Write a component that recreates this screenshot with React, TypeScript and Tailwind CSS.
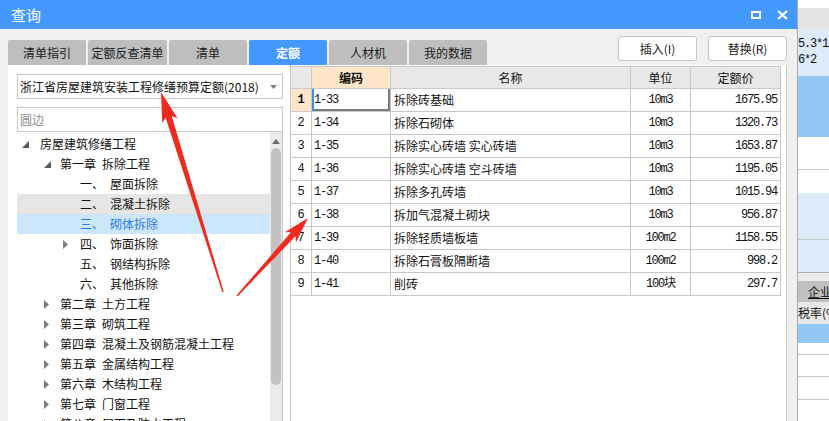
import React from "react"

const cjk = { fontFamily: '"Noto Sans CJK SC", "Noto Sans", sans-serif' }
const mono = { fontFamily: '"Liberation Mono", "Noto Sans CJK SC", monospace' }

const tabs = [
  { label: "清单指引", w: "w-[78px]" },
  { label: "定额反查清单", w: "w-[79px]" },
  { label: "清单", w: "w-[78px]" },
  { label: "定额", w: "w-[78px]", active: true },
  { label: "人材机", w: "w-[78px]" },
  { label: "我的数据", w: "w-[78px]" },
]

type Node = {
  pad: string
  gap: string
  icon?: "open" | "closed"
  pre?: string
  text: string
  hl?: "gray" | "blue"
  chapter?: boolean
}

const tree: Node[] = [
  { pad: "pl-[4px]", gap: "mr-[11px]", icon: "open", text: "房屋建筑修缮工程" },
  { pad: "pl-[26px]", gap: "mr-[9px]", icon: "open", pre: "第一章", text: "拆除工程", chapter: true },
  { pad: "pl-[44px]", gap: "mr-[11px]", pre: "一、", text: "屋面拆除" },
  { pad: "pl-[44px]", gap: "mr-[11px]", pre: "二、", text: "混凝土拆除", hl: "gray" },
  { pad: "pl-[44px]", gap: "mr-[11px]", pre: "三、", text: "砌体拆除", hl: "blue" },
  { pad: "pl-[44px]", gap: "mr-[11px]", icon: "closed", pre: "四、", text: "饰面拆除" },
  { pad: "pl-[44px]", gap: "mr-[11px]", pre: "五、", text: "钢结构拆除" },
  { pad: "pl-[44px]", gap: "mr-[11px]", pre: "六、", text: "其他拆除" },
  { pad: "pl-[25px]", gap: "mr-[10px]", icon: "closed", pre: "第二章", text: "土方工程", chapter: true },
  { pad: "pl-[25px]", gap: "mr-[10px]", icon: "closed", pre: "第三章", text: "砌筑工程", chapter: true },
  { pad: "pl-[25px]", gap: "mr-[10px]", icon: "closed", pre: "第四章", text: "混凝土及钢筋混凝土工程", chapter: true },
  { pad: "pl-[25px]", gap: "mr-[10px]", icon: "closed", pre: "第五章", text: "金属结构工程", chapter: true },
  { pad: "pl-[25px]", gap: "mr-[10px]", icon: "closed", pre: "第六章", text: "木结构工程", chapter: true },
  { pad: "pl-[25px]", gap: "mr-[10px]", icon: "closed", pre: "第七章", text: "门窗工程", chapter: true },
  { pad: "pl-[25px]", gap: "mr-[10px]", icon: "closed", pre: "第八章", text: "屋面及防水工程", chapter: true },
]

const rows = [
  ["1-33", "拆除砖基础", "10m3", "1675.95"],
  ["1-34", "拆除石砌体", "10m3", "1320.73"],
  ["1-35", "拆除实心砖墙 实心砖墙", "10m3", "1653.87"],
  ["1-36", "拆除实心砖墙 空斗砖墙", "10m3", "1195.05"],
  ["1-37", "拆除多孔砖墙", "10m3", "1015.94"],
  ["1-38", "拆加气混凝土砌块", "10m3", "956.87"],
  ["1-39", "拆除轻质墙板墙", "100m2", "1158.55"],
  ["1-40", "拆除石膏板隔断墙", "100m2", "998.2"],
  ["1-41", "削砖", "100块", "297.7"],
]

function TreeIcon({ kind }: { kind?: "open" | "closed" }) {
  return (
    <span className="w-[8px] h-[10px] flex items-center justify-center shrink-0">
      {kind === "open" && (
        <svg width="7" height="7" viewBox="0 0 7 7">
          <polygon points="7,0 7,7 0,7" fill="#5a5a5a" />
        </svg>
      )}
      {kind === "closed" && (
        <svg width="5" height="9" viewBox="0 0 5 9">
          <polygon points="0,0 5,4.5 0,9" fill="#7c7c7c" />
        </svg>
      )}
    </span>
  )
}

function arrow(x1: number, y1: number, x2: number, y2: number, hl: number, hw: number, st: number, sh: number) {
  const dx = x2 - x1
  const dy = y2 - y1
  const len = Math.hypot(dx, dy)
  const ux = dx / len
  const uy = dy / len
  const nx = -uy
  const ny = ux
  const bx = x2 - ux * hl
  const by = y2 - uy * hl
  const cx = x2 - ux * (hl - 4)
  const cy = y2 - uy * (hl - 4)
  const pts = [
    [x1 + nx * st, y1 + ny * st],
    [cx + nx * sh, cy + ny * sh],
    [bx + nx * hw, by + ny * hw],
    [x2, y2],
    [bx - nx * hw, by - ny * hw],
    [cx - nx * sh, cy - ny * sh],
    [x1 - nx * st, y1 - ny * st],
  ]
  return pts.map((p) => p.join(",")).join(" ")
}

function Arrows() {
  return (
    <svg className="absolute inset-0 pointer-events-none" width="829" height="421">
      <polygon points={arrow(223, 292, 161, 92, 30, 8, 0.7, 3.2)} fill="#ef2b1f" />
      <polygon points={arrow(237, 296, 308, 218, 26, 7.5, 0.7, 3)} fill="#ef2b1f" />
    </svg>
  )
}

export default function App() {
  return (
    <div className="relative w-[829px] h-[421px] overflow-hidden flex bg-white text-[12px] text-[#111]" style={cjk}>
      {/* dialog window */}
      <div className="w-[797px] h-full flex flex-col bg-[#f0f0f0]">
        <div className="h-[29px] shrink-0 bg-[#4499ff] flex items-center justify-between pl-[11px] pr-[9px]">
          <span className="text-white text-[15px] leading-none">查询</span>
          <div className="flex items-center gap-[16px]">
            <span className="w-[10px] h-[8px] border-2 border-white" />
            <svg width="11" height="10" viewBox="0 0 11 10">
              <path d="M1 1 L10 9 M10 1 L1 9" stroke="white" strokeWidth="2.2" />
            </svg>
          </div>
        </div>

        <div className="h-[36px] shrink-0 flex justify-between pl-[8px] pr-[10px]">
          <div className="flex items-end gap-[2px]">
            {tabs.map((t) => (
              <div
                key={t.label}
                className={`${t.w} h-[25px] rounded-t-[2px] flex items-center justify-center ${
                  t.active ? "bg-[#4499ff] text-white font-bold" : "bg-[#bebebe] text-[#1a1a1a]"
                }`}
              >
                {t.label}
              </div>
            ))}
          </div>
          <div className="flex gap-[11px] pt-[7px]">
            <button className="w-[79px] h-[25px] bg-white border border-[#c4c4c4] rounded-[3px] text-[#222]">插入(I)</button>
            <button className="w-[79px] h-[25px] bg-white border border-[#c4c4c4] rounded-[3px] text-[#222]">替换(R)</button>
          </div>
        </div>

        <div className="flex-1 flex pl-[8px] pr-[10px] min-h-0">
          {/* left panel */}
          <div className="w-[282px] bg-white flex flex-col pl-[9px] pr-[7px] pt-[9px] min-h-0">
            <div className="h-[25px] shrink-0 border border-[#c8c8c8] flex items-center justify-between pl-[2px] pr-[5px]">
              <span className="whitespace-nowrap">浙江省房屋建筑安装工程修缮预算定额(2018)</span>
              <svg width="7" height="4" viewBox="0 0 7 4">
                <polygon points="0,0 7,0 3.5,4" fill="#808080" />
              </svg>
            </div>
            <div className="h-[25px] shrink-0 mt-[8px] border border-[#c8c8c8] flex items-center pl-[2px] text-[#8c8c8c]">圆边</div>
            <div className="flex-1 flex min-h-0 overflow-hidden border-r border-[#c8c8c8]">
              <div className="flex-1 pt-[2px]">
                {tree.map((n, i) => (
                  <div
                    key={i}
                    className={`h-[20px] flex items-center whitespace-nowrap ${n.pad} ${
                      n.hl === "gray" ? "bg-[#e6e6e6]" : n.hl === "blue" ? "bg-[#cce6fc] text-[#2d7be5]" : ""
                    }`}
                  >
                    <TreeIcon kind={n.icon} />
                    <span className={n.gap} />
                    {n.pre && <span className={n.chapter ? "mr-[6px]" : "w-[30px]"}>{n.pre}</span>}
                    <span>{n.text}</span>
                  </div>
                ))}
              </div>
              <div className="w-[12px] bg-[#ebebeb] flex flex-col items-center pt-[7px]">
                <svg width="8" height="5" viewBox="0 0 8 5">
                  <polygon points="0,5 8,5 4,0" fill="#6a6a6a" />
                </svg>
                <div className="mt-[4px] w-[10px] h-[237px] rounded-full bg-[#c2c2c2]" />
              </div>
            </div>
          </div>

          {/* right panel */}
          <div className="w-[497px] bg-white border-l border-r border-[#c8c8c8] pt-[1px]">
            <div className="w-[490px] border-t border-[#c8c8c8]">
              <div className="h-[22px] flex border-b border-[#c8c8c8] bg-[#e8e8e8]">
                <div className="w-[21px] border-r border-[#c8c8c8]" />
                <div className="w-[79px] border-r border-[#c8c8c8] bg-[#ffe6c9] flex items-center justify-center font-bold">编码</div>
                <div className="w-[240px] border-r border-[#c8c8c8] flex items-center justify-center">名称</div>
                <div className="w-[60px] border-r border-[#c8c8c8] flex items-center justify-center">单位</div>
                <div className="w-[90px] border-r border-[#c8c8c8] flex items-center justify-center">定额价</div>
              </div>
              {rows.map((r, i) => (
                <div key={r[0]} className="h-[23px] flex border-b border-[#c8c8c8]">
                  <div
                    className={`w-[21px] border-r border-[#c8c8c8] flex items-center justify-center text-[12px] ${
                      i === 0 ? "bg-[#ffe6c9] font-bold" : ""
                    }`}
                    style={mono}
                  >
                    {i + 1}
                  </div>
                  <div
                    className={`w-[79px] border-r border-[#c8c8c8] flex items-center pl-[2px] text-[12px] tracking-[-1.2px] ${
                      i === 0 ? "shadow-[inset_2px_0_0_#3d8ee6,inset_-2px_-2px_0_#7a7a7a]" : ""
                    }`}
                    style={mono}
                  >
                    {r[0]}
                  </div>
                  <div className="w-[240px] border-r border-[#c8c8c8] flex items-center pl-[3px] whitespace-nowrap">{r[1]}</div>
                  <div className="w-[60px] border-r border-[#c8c8c8] flex items-center justify-center text-[12px] tracking-[-1.2px]" style={mono}>
                    {r[2]}
                  </div>
                  <div className="w-[90px] border-r border-[#c8c8c8] flex items-center justify-end pr-[3px] text-[12px] tracking-[-1.2px]" style={mono}>
                    {r[3]}
                  </div>
                </div>
              ))}
            </div>
          </div>
        </div>
      </div>

      {/* background application strip */}
      <div className="w-[32px] h-full flex flex-col border-l border-[#a8a8a8] overflow-hidden whitespace-nowrap text-[12px]" style={mono}>
        <div className="h-[8px] bg-white" />
        <div className="h-[21px] bg-[#e4e4e4]" />
        <div className="h-[47px] bg-[#ddebfb] pt-[7px] leading-[16px] tracking-[-1.2px]">
          <div>5.3*1</div>
          <div>6*2</div>
        </div>
        <div className="h-[61px] bg-[#94c8f4]" />
        <div className="h-[33px] bg-white border-b border-[#c8c8c8]" />
        <div className="h-[23px] bg-white" />
        <div className="h-[47px] bg-[#ddebfb] border-b border-[#c8c8c8]" />
        <div className="h-[33px] bg-[#ddebfb] border-b border-[#b0b0b0]" />
        <div className="h-[8px] bg-[#ececec]" />
        <div className="h-[21px] bg-[#c0c0c0] pl-[10px] flex items-center text-[12px]" style={cjk}>
          <span className="underline">企业</span>
        </div>
        <div className="h-[22px] bg-[#e8e8e8] flex items-center text-[12px]" style={cjk}>
          税率(%
        </div>
        <div className="h-[19px] bg-[#94c8f4]" />
        <div className="h-[12px] bg-white border-b border-[#c8c8c8]" />
        <div className="h-[22px] bg-white border-b border-[#c8c8c8]" />
        <div className="h-[23px] bg-white border-b border-[#c8c8c8]" />
        <div className="flex-1 bg-white" />
      </div>

      <Arrows />
    </div>
  )
}
